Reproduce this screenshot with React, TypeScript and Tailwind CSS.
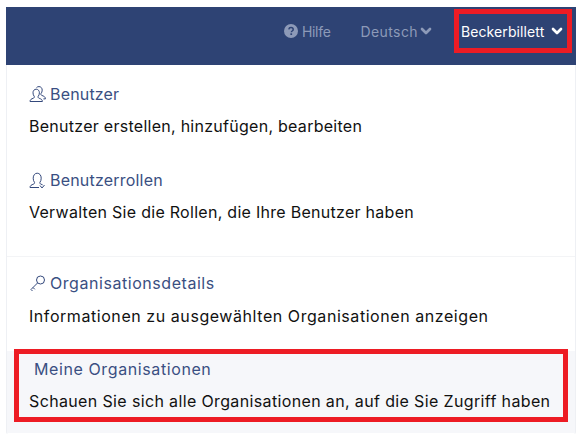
import { ChevronDown } from 'lucide-react';

const FONT = "font-['Inter','Liberation_Sans',sans-serif]";

function UsersIcon() {
  return (
    <svg viewBox="0 0 17 17" className="h-[17px] w-[17px] shrink-0" fill="none" stroke="#34497c" strokeWidth="1">
      <path d="M1 15.500c0-2 1.500-2.600 3.200-3.200 1-.4 1.300-1 1.100-1.800C4.500 9.500 4 8.300 4 6.800 4 4.700 5.300 3.200 7.200 3.200s3.200 1.500 3.200 3.600c0 1.500-.5 2.700-1.300 3.700-.2.800.1 1.400 1.100 1.800 1.700.6 3.200 1.200 3.200 3.200z" />
      <path d="M7.500 1.600C8.200.9 9 .6 10 .6c1.900 0 3.200 1.500 3.200 3.500 0 1.500-.5 2.700-1.300 3.600-.2.800.1 1.400 1.100 1.800 1.700.6 3.400 1.200 3.400 3.400h-2" />
    </svg>
  );
}

function UserCheckIcon() {
  return (
    <svg viewBox="0 0 17 17" className="h-[17px] w-[17px] shrink-0" fill="none" stroke="#34497c" strokeWidth="1">
      <path d="M1 15.500h9M1 15.500c0-2 1.500-2.600 3.400-3.300 1-.4 1.300-1 1.100-1.800C4.700 9.400 4.200 8 4.200 6.200 4.200 3.300 5.800 1.200 8.200 1.200s4 2.100 4 5c0 1.800-.5 3.200-1.300 4.200-.2.800.1 1.400 1.100 1.800l1.600.6" />
      <path d="M11 13.500l2 2.500 2.500-3" />
    </svg>
  );
}

function KeyIcon() {
  return (
    <svg viewBox="0 0 17 17" className="h-[17px] w-[17px] shrink-0" fill="none" stroke="#34497c" strokeWidth="1">
      <circle cx="11.500" cy="5" r="4" />
      <path d="M8.500 8 2 14.500M4 12.500l1.800 1.800M2 14.500l1.500 1.500" />
    </svg>
  );
}

function HelpIcon() {
  return (
    <svg viewBox="0 0 14 14" className="h-[14px] w-[14px]">
      <circle cx="7" cy="7" r="7" fill="#8d9ab8" />
      <path d="M4.800 5.300C5 4.100 5.900 3.500 7 3.500c1.200 0 2.200.7 2.200 1.900 0 1.700-1.800 1.500-1.800 2.800" fill="none" stroke="#2e4374" strokeWidth="1.500" />
      <rect x="6.400" y="9.300" width="1.700" height="1.700" fill="#2e4374" />
    </svg>
  );
}

interface ItemProps {
  icon: React.ReactNode;
  title: string;
  text: string;
  className: string;
  titleClass: string;
  textClass: string;
}

function Item({ icon, title, text, className, titleClass, textClass }: ItemProps) {
  return (
    <div className={className}>
      <div className={`flex items-center gap-[4px] text-[16px] leading-[20px] text-[#3a4f82] ${titleClass}`}>
        {icon}
        <span>{title}</span>
      </div>
      <p className={`text-[16px] leading-[20px] text-[#111] ${textClass}`}>{text}</p>
    </div>
  );
}

export default function App() {
  return (
    <div className={`h-[446px] w-[584px] overflow-hidden bg-white pl-[6px] pt-[7px] pr-[8px] ${FONT}`}>
      <header className="flex h-[58px] items-start justify-end bg-[#2e4374] pr-[4px] pt-[2px] text-[14px]">
        <div className="mr-[30px] flex h-[44px] items-center gap-[4px] tracking-[-0.3px] text-[#8d9ab8]">
          <HelpIcon />
          <span>Hilfe</span>
        </div>
        <div className="mr-[20px] flex h-[44px] items-center tracking-[0.4px] text-[#8d9ab8]">
          <span>Deutsch</span>
          <ChevronDown size={16} strokeWidth={4} />
        </div>
        <div className="flex h-[44px] w-[118px] items-center justify-between border-[5px] border-[#ed1c24] pl-[2px] pr-[2px] tracking-[0.1px] text-white">
          <span>Beckerbillett</span>
          <ChevronDown size={16} strokeWidth={4} />
        </div>
      </header>
      <main className="h-[369px] rounded-b-[2px] border-x border-[#eef0f4]">
        <Item
          icon={<UsersIcon />}
          title="Benutzer"
          text="Benutzer erstellen, hinzufügen, bearbeiten"
          className="px-[22px] pt-[19px]"
          titleClass="tracking-[0.17px]"
          textClass="mt-[12px] tracking-[0.27px]"
        />
        <Item
          icon={<UserCheckIcon />}
          title="Benutzerrollen"
          text="Verwalten Sie die Rollen, die Ihre Benutzer haben"
          className="px-[22px] pt-[34px]"
          titleClass="tracking-[0.2px]"
          textClass="mt-[12px] tracking-[0.28px]"
        />
        <div className="mt-[34px] border-t border-[#f3f4f6]">
          <Item
            icon={<KeyIcon />}
            title="Organisationsdetails"
            text="Informationen zu ausgewählten Organisationen anzeigen"
            className="px-[22px] pt-[16px]"
            titleClass="tracking-[0.55px]"
            textClass="mt-[13px] tracking-[0.56px]"
          />
        </div>
        <div className="mt-[25px] h-[82px] bg-[#f6f7fa] px-[7px]">
          <div className="relative -top-[2px] h-[73px] border-[5px] border-[#ed1c24] pl-[15px] pt-[5px]">
            <div className="text-[16px] leading-[20px] tracking-[0.6px] text-[#3a4f82]">Meine Organisationen</div>
            <p className="mt-[12px] -ml-[5px] whitespace-nowrap text-[16px] leading-[20px] tracking-[0.36px] text-[#111]">
              Schauen Sie sich alle Organisationen an, auf die Sie Zugriff haben
            </p>
          </div>
        </div>
      </main>
    </div>
  );
}
